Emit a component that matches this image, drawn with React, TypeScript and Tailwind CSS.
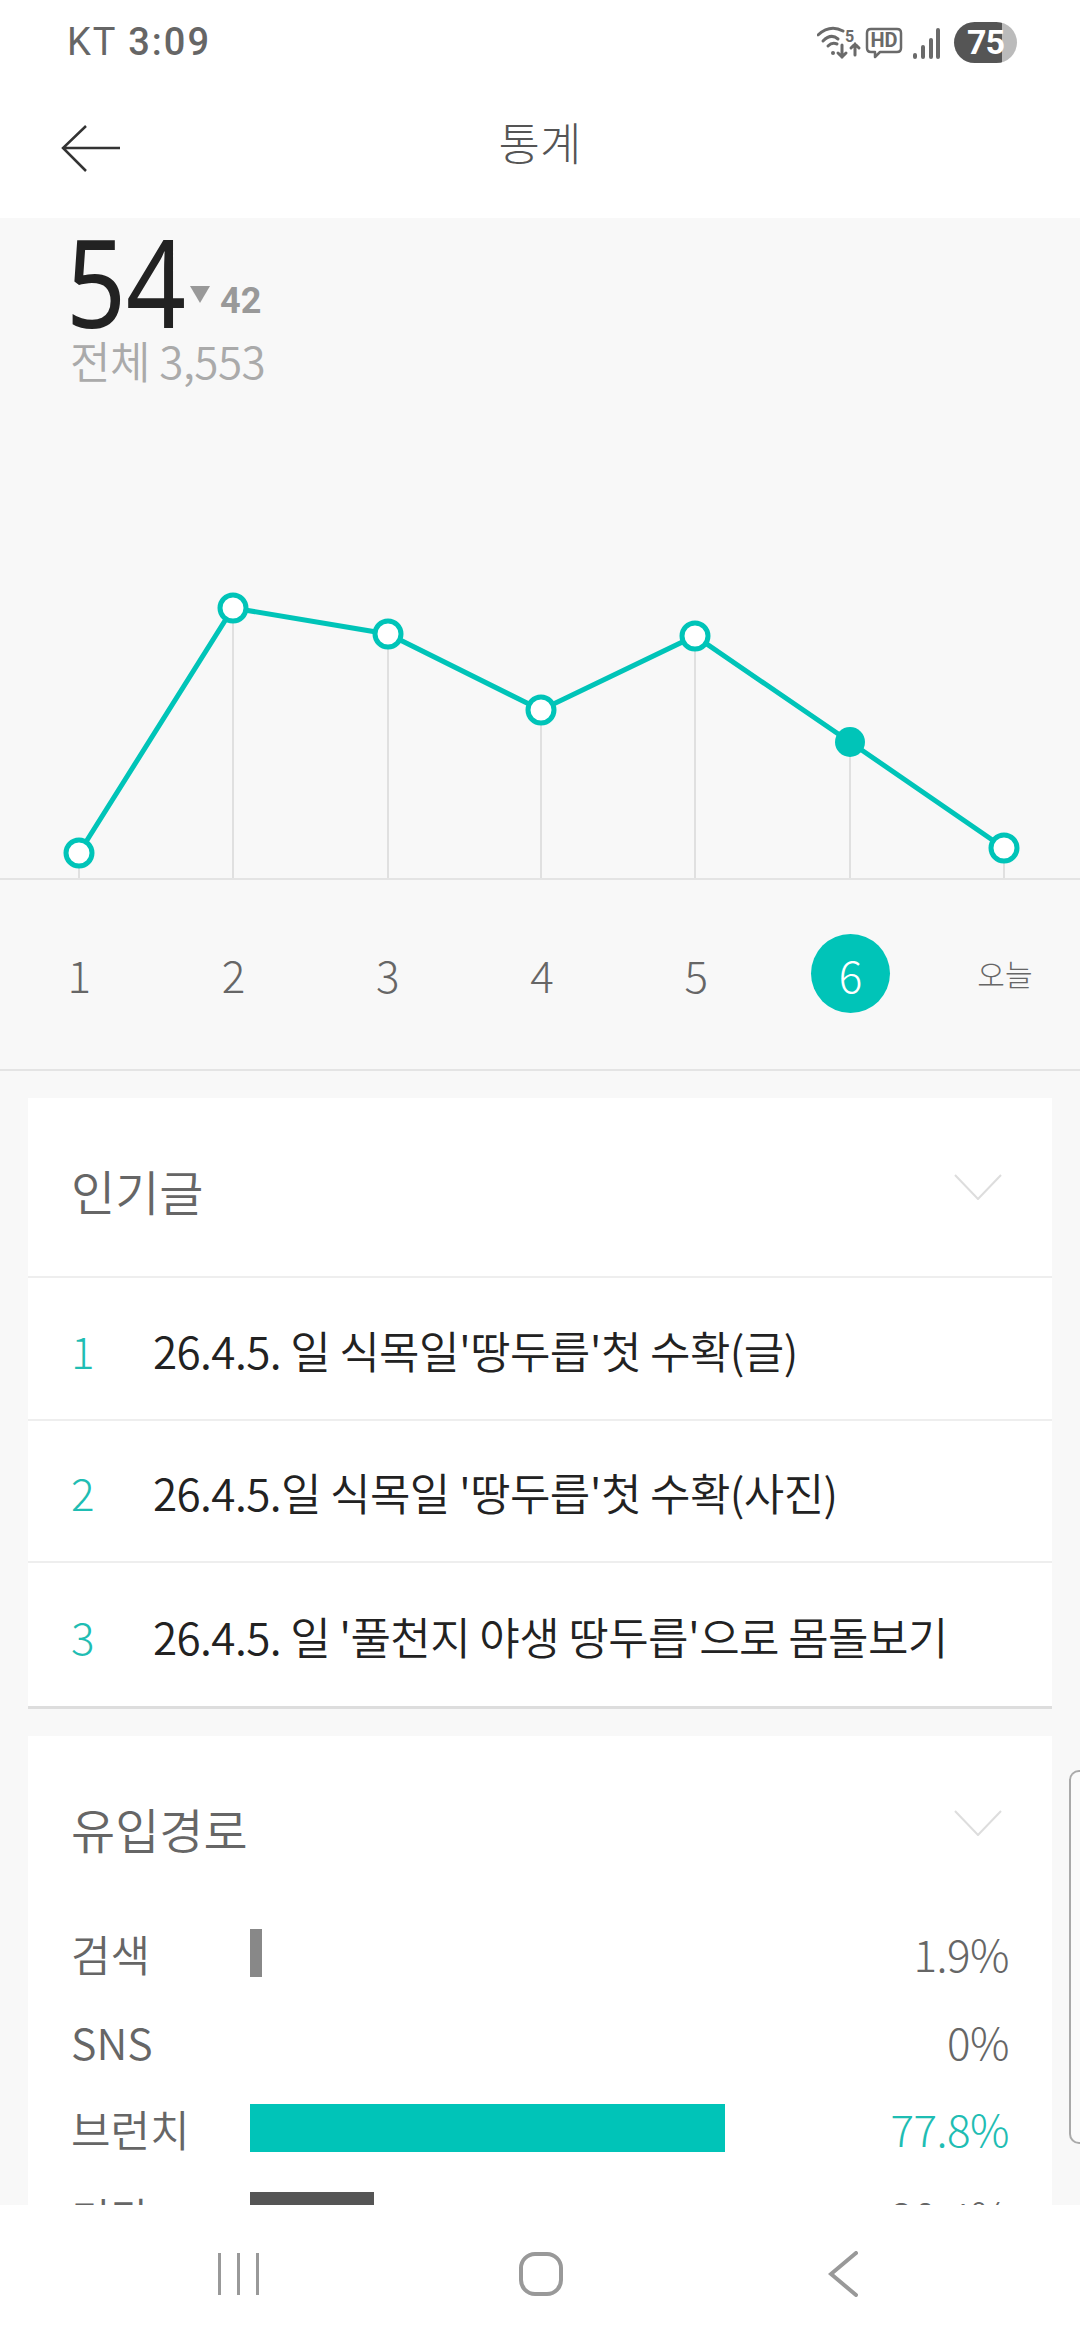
const TEAL = '#00c4b8';

const points = [
  [79, 853],
  [233, 608],
  [388, 634],
  [541, 710],
  [695, 636],
  [850, 742],
  [1004, 848],
];

const days = ['1', '2', '3', '4', '5', '6', '오늘'];

const posts = [
  "26.4.5. 일 식목일'땅두릅'첫 수확(글)",
  "26.4.5.일 식목일 '땅두릅'첫 수확(사진)",
  "26.4.5. 일 '풀천지 야생 땅두릅'으로 몸돌보기",
];

const referrers = [
  { name: '검색', pct: 1.9, label: '1.9%', bar: 'bg-[#888888]', text: 'text-[#666666]' },
  { name: 'SNS', pct: 0, label: '0%', bar: 'bg-[#888888]', text: 'text-[#666666]' },
  { name: '브런치', pct: 77.8, label: '77.8%', bar: 'bg-[#00c4b8]', text: 'text-[#1fbdb3]' },
  { name: '기타', pct: 20.4, label: '20.4%', bar: 'bg-[#555555]', text: 'text-[#666666]' },
];

const Chevron = () => (
  <svg width="48" height="26" viewBox="0 0 48 26" fill="none" stroke="#dddddd" strokeWidth="2">
    <path d="M1 1 L24 25 L47 1" />
  </svg>
);

const StatusIcons = () => (
  <div className="flex items-center">
    <svg width="128" height="44" viewBox="0 0 128 44" fill="none" stroke="#6a6a6a" strokeWidth="3" strokeLinecap="round">
      <path d="M1 15 Q13 4 26 11" />
      <path d="M6 21 Q14 13 21 19" />
      <path d="M11 26 Q15 22 20 24" />
      <circle cx="16" cy="33" r="2" fill="#6a6a6a" stroke="none" />
      <path d="M25 25 V37 M21 33 L25 37 L29 33" />
      <path d="M38 35 V24 M34 28 L38 24 L42 28" />
      <path d="M54 9 H80 Q84 9 84 13 V28 Q84 32 80 32 H63 L58 37 V32 H54 Q50 32 50 28 V13 Q50 9 54 9 Z" strokeWidth="2.5" strokeLinejoin="round" />
      <path d="M98 37 V35 M106 37 V27 M114 37 V20 M121 37 V10" strokeWidth="4" />
      <text x="28" y="22" fontSize="16" fontWeight="700" fill="#6a6a6a" stroke="none" fontFamily="Roboto, sans-serif">5</text>
      <text x="67" y="27" textAnchor="middle" fontSize="20" fontWeight="700" fill="#6a6a6a" stroke="none" fontFamily="Roboto, sans-serif">HD</text>
    </svg>
    <div className="ml-[9px] flex h-[41px] w-[63px] items-center justify-center rounded-full bg-[linear-gradient(90deg,#555555_76%,#bbbbbb_76%)] font-['Roboto',sans-serif] text-[34px] font-bold tracking-[-1px] text-white">
      75
    </div>
  </div>
);

const App = () => {
  return (
    <div className="relative flex h-[2340px] w-[1080px] flex-col overflow-hidden bg-[#f8f8f8] font-['Noto_Sans_CJK_KR','Noto_Sans',sans-serif]">
      {/* status + title */}
      <div className="h-[218px] shrink-0 bg-white">
        <div className="flex h-[84px] items-center justify-between pl-[67px] pr-[63px]">
          <div className="mt-[1px] font-['Roboto',sans-serif] text-[38px] tracking-[2px] text-[#666666]">
            KT <span className="font-medium">3:09</span>
          </div>
          <StatusIcons />
        </div>
        <div className="relative flex h-[122px] items-center justify-center">
          <svg width="60" height="48" viewBox="0 0 60 48" fill="none" stroke="#333333" strokeWidth="2.5" className="absolute left-[61px] top-[41px]">
            <path d="M59 23 H2 M25 1 L2 23 L25 46" />
          </svg>
          <span className="mb-[6px] text-[45px] font-light text-[#555555]">통계</span>
        </div>
      </div>

      <div className="min-h-0 flex-1 overflow-hidden">
        {/* numbers */}
        <div className="h-[180px] pl-[66px]">
          <div className="flex h-[121px] items-end">
            <span className="w-[124px] origin-left scale-x-[0.86] font-['Noto_Sans',sans-serif] text-[122px] leading-[116px] text-[#222222]">54</span>
            <span className="mb-[36px] h-0 w-0 border-x-[10px] border-t-[17px] border-x-transparent border-t-[#999999]" />
            <span className="mb-[16px] ml-[10px] font-['Roboto',sans-serif] text-[36px] font-bold leading-[44px] text-[#999999]">42</span>
          </div>
          <div className="-mt-[7px] pl-[4px] text-[44px] font-[350] leading-[56px] tracking-[-0.5px] text-[#aaaaaa]">전체 3,553</div>
        </div>

        {/* chart */}
        <svg width="1080" height="480" viewBox="0 398 1080 480" className="block">
          {points.map(([x, y]) => (
            <line key={x} x1={x} y1={y} x2={x} y2={878} stroke="#e0e0e0" strokeWidth="2" />
          ))}
          <polyline points={points.map((p) => p.join(',')).join(' ')} fill="none" stroke={TEAL} strokeWidth="5" />
          {points.map(([x, y], i) => (
            <circle key={x} cx={x} cy={y} r={i === 5 ? 15 : 13} fill={i === 5 ? TEAL : '#ffffff'} stroke={TEAL} strokeWidth={i === 5 ? 0 : 5} />
          ))}
        </svg>

        {/* day axis */}
        <div className="grid h-[193px] grid-cols-[repeat(7,154.3px)] items-center border-y-2 border-[#e4e4e4] pb-[2px] pl-[2px]">
          {days.map((d, i) => (
            <div key={d} className="flex justify-center">
              {i === 5 ? (
                <span className="flex h-[79px] w-[79px] items-center justify-center rounded-full bg-[#00c4b8] text-[44px] font-light text-white">{d}</span>
              ) : (
                <span className={i === 6 ? 'text-[30px] font-light text-[#666666]' : 'text-[44px] font-light text-[#666666]'}>{d}</span>
              )}
            </div>
          ))}
        </div>

        {/* popular posts */}
        <div className="mx-[28px] mt-[27px] border-b-[3px] border-[#dddddd] bg-white">
          <div className="flex h-[180px] items-center justify-between border-b-2 border-[#eeeeee] pl-[43px] pr-[50px]">
            <span className="mt-[6px] text-[48px] font-[350] text-[#666666]">인기글</span>
            <Chevron />
          </div>
          {posts.map((title, i) => (
            <div key={title} className={i < 2 ? 'flex h-[142.5px] items-center border-b-2 border-[#eeeeee] pl-[43px] pt-[3px]' : 'flex h-[142.5px] items-center pl-[43px] pt-[3px]'}>
              <span className="w-[82px] text-[44px] font-light text-[#1fbdb3]">{i + 1}</span>
              <span className="whitespace-nowrap text-[44px] font-[350] tracking-[-0.6px] text-[#222222]">{title}</span>
            </div>
          ))}
        </div>

        {/* referrers */}
        <div className="mx-[28px] mt-[27px] bg-white px-[43px]">
          <div className="flex h-[174px] items-center justify-between pr-[7px]">
            <span className="mt-[10px] text-[48px] font-[350] text-[#666666]">유입경로</span>
            <Chevron />
          </div>
          {referrers.map((r) => (
            <div key={r.name} className="flex h-[87.5px] items-center">
              <span className="w-[179px] text-[43px] font-[350] text-[#666666]">{r.name}</span>
              <div className="flex-1">
                {r.pct > 0 && <div className={`h-[48px] ${r.bar}`} style={{ width: r.pct * 6.1 }} />}
              </div>
              <span className={`text-[44px] font-light tracking-[-0.5px] ${r.text}`}>{r.label}</span>
            </div>
          ))}
        </div>
      </div>

      {/* system nav */}
      <div className="flex h-[135px] shrink-0 items-center bg-white pl-[218px] pt-[3px]">
        <div className="flex h-[42px] w-[41px] justify-between">
          <span className="w-[3px] bg-[#999999]" />
          <span className="w-[3px] bg-[#999999]" />
          <span className="w-[3px] bg-[#999999]" />
        </div>
        <div className="ml-[260px] h-[44px] w-[44px] rounded-[16px] border-[4px] border-[#999999]" />
        <svg width="30" height="46" viewBox="0 0 30 46" fill="none" stroke="#999999" strokeWidth="4" strokeLinecap="round" className="ml-[265px]">
          <path d="M28 2 L3 23 L28 44" />
        </svg>
      </div>

      {/* edge panel handle */}
      <div className="absolute right-0 top-[1770px] h-[374px] w-[11px] rounded-l-[10px] border-y-2 border-l-2 border-[#aaaaaa] bg-white/40" />
    </div>
  );
};

export default App;
